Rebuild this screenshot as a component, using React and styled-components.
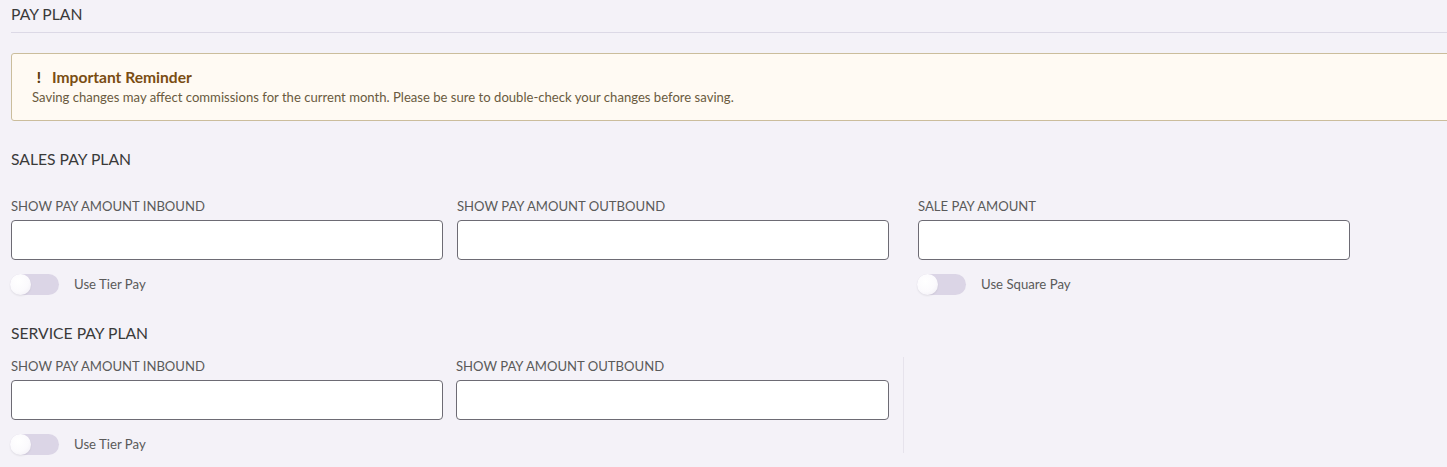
import React from "react";
import styled, { createGlobalStyle } from "styled-components";

const Global = createGlobalStyle`
  html, body { margin: 0; padding: 0; background: #f4f2f8; overflow: hidden; }
  body { font-family: Lato, "Open Sans", sans-serif; color: #333; }
  * { box-sizing: border-box; }
`;

const Page = styled.div`
  width: 1447px;
  height: 467px;
  padding: 0 0 0 11px;
  overflow: hidden;
`;

const Header = styled.div`
  font-size: 15.7px;
  line-height: 17px;
  color: #3a3a3a;
  padding-top: 6px;
  padding-bottom: 9px;
  border-bottom: 1px solid #dcd9e6;
`;

const Reminder = styled.div`
  margin-top: 20px;
  width: 1460px;
  height: 68px;
  background: #fffaf3;
  border: 1px solid #cbbd9c;
  border-radius: 3px;
  padding: 14px 0 0 20px;
`;

const ReminderTitle = styled.div`
  display: flex;
  align-items: center;
  gap: 9px;
  font-size: 15.6px;
  font-weight: 700;
  color: #7a4d12;
  line-height: 18px;
`;

const Bang = styled.span`
  font-weight: 900;
  font-size: 15px;
  color: #5c3a0c;
  width: 8px;
  text-align: center;
  margin-left: 3px;
`;

const ReminderText = styled.div`
  font-size: 13.1px;
  line-height: 15px;
  color: #6a5a40;
  margin-top: 4px;
`;

const SectionTitle = styled.div`
  font-size: 15.7px;
  line-height: 17px;
  color: #3a3a3a;
  margin-top: ${(p) => p.$top}px;
`;

const Row = styled.div`
  display: flex;
  margin-top: ${(p) => p.$top}px;
`;

const LeftGroup = styled.div`
  width: 892px;
  display: grid;
  grid-template-columns: ${(p) => p.$cols};
  column-gap: ${(p) => p.$gap}px;
  padding-right: 14px;
`;

const RightGroup = styled.div`
  width: 446px;
  padding-left: 14px;
  border-left: 1px solid ${(p) => (p.$line ? "#e6e3ec" : "transparent")};
  margin-top: ${(p) => (p.$line ? -1 : 0)}px;
  height: ${(p) => (p.$line ? "96px" : "auto")};
`;

const Field = styled.div`
  display: flex;
  flex-direction: column;
`;

const Label = styled.label`
  font-size: 13.1px;
  line-height: 16px;
  color: #5a5a5a;
  text-transform: uppercase;
`;

const Input = styled.input`
  margin-top: 6px;
  width: ${(p) => p.$w || "100%"};
  height: 40px;
  border: 1px solid #6d6b74;
  border-radius: 4px;
  background: #fff;
  outline: none;
  font: inherit;
  padding: 0 10px;
`;

const ToggleRow = styled.div`
  display: flex;
  align-items: center;
  gap: 15px;
  margin-top: 13px;
  height: 22px;
`;

const Track = styled.span`
  position: relative;
  display: inline-block;
  width: 49px;
  height: 21px;
  border-radius: 11px;
  background: #dbd5e6;
  margin-left: -1px;
`;

const Thumb = styled.span`
  position: absolute;
  left: 0;
  top: 0;
  width: 21px;
  height: 21px;
  border-radius: 50%;
  background: radial-gradient(circle at 40% 35%, #ffffff 0%, #fbfafd 55%, #eeecf2 100%);
  box-shadow: 0 1px 2px rgba(0, 0, 0, 0.08);
`;

const ToggleLabel = styled.span`
  font-size: 13.2px;
  color: #5a5a5a;
  line-height: 15px;
`;

function Toggle({ label }) {
  return (
    <ToggleRow>
      <Track>
        <Thumb />
      </Track>
      <ToggleLabel>{label}</ToggleLabel>
    </ToggleRow>
  );
}

export default function App() {
  return (
    <Page>
      <Global />
      <Header>PAY PLAN</Header>
      <Reminder>
        <ReminderTitle>
          <Bang>!</Bang>
          Important Reminder
        </ReminderTitle>
        <ReminderText>
          Saving changes may affect commissions for the current month. Please be sure to double-check your changes before saving.
        </ReminderText>
      </Reminder>

      <SectionTitle $top={30}>SALES PAY PLAN</SectionTitle>
      <Row $top={30}>
        <LeftGroup $cols="432px 432px" $gap={14}>
          <Field>
            <Label>Show Pay Amount Inbound</Label>
            <Input />
            <Toggle label="Use Tier Pay" />
          </Field>
          <Field>
            <Label>Show Pay Amount Outbound</Label>
            <Input />
          </Field>
        </LeftGroup>
        <RightGroup>
          <Field>
            <Label>Sale Pay Amount</Label>
            <Input $w="432px" />
            <Toggle label="Use Square Pay" />
          </Field>
        </RightGroup>
      </Row>

      <SectionTitle $top={30}>SERVICE PAY PLAN</SectionTitle>
      <Row $top={16}>
        <LeftGroup $cols="432px 433px" $gap={13}>
          <Field>
            <Label>Show Pay Amount Inbound</Label>
            <Input />
            <Toggle label="Use Tier Pay" />
          </Field>
          <Field>
            <Label>Show Pay Amount Outbound</Label>
            <Input />
          </Field>
        </LeftGroup>
        <RightGroup $line />
      </Row>
    </Page>
  );
}
